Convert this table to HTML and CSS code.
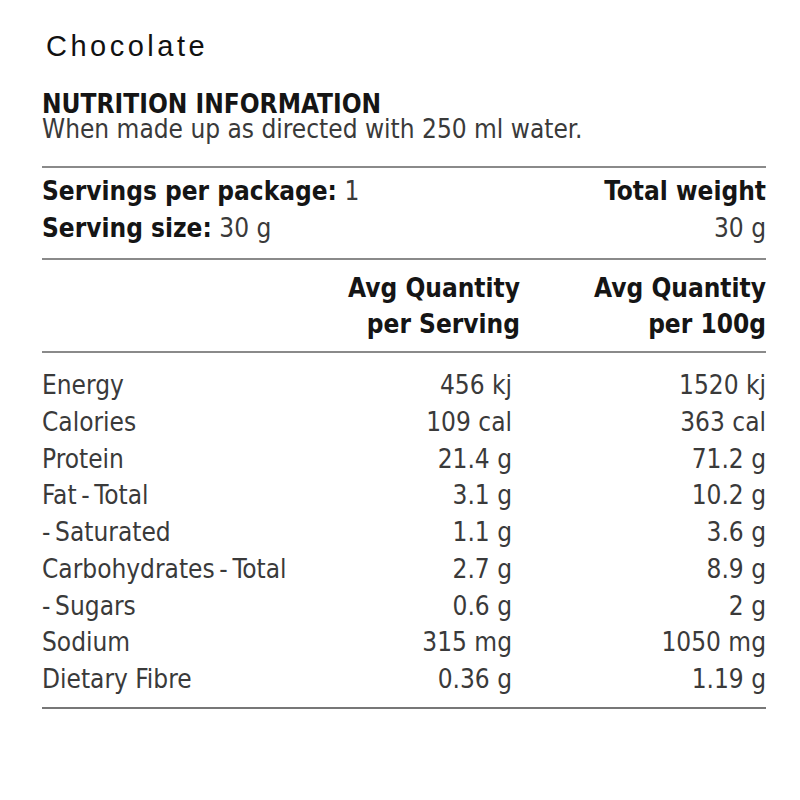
FILE: index.html
```html
<!DOCTYPE html>
<html>
<head>
<meta charset="utf-8">
<link rel="stylesheet" href="styles.css">
</head>
<body>
<div class="title">Chocolate</div>
<div class="label">
  <div class="heading">NUTRITION INFORMATION</div>
  <div class="sub">When made up as directed with 250 ml water.</div>
  <div class="servings">
    <div class="serv-left">
      <div><b>Servings per package:</b> 1</div>
      <div><b>Serving size:</b> 30 g</div>
    </div>
    <div class="serv-right">
      <div><b>Total weight</b></div>
      <div>30 g</div>
    </div>
  </div>
  <div class="colhead">
    <div></div>
    <div class="h2">Avg Quantity<br>per Serving</div>
    <div class="h3">Avg Quantity<br>per 100g</div>
  </div>
  <div class="rows">
    <div class="row"><span>Energy</span><span class="v2">456 kj</span><span class="v3">1520 kj</span></div>
    <div class="row"><span>Calories</span><span class="v2">109 cal</span><span class="v3">363 cal</span></div>
    <div class="row"><span>Protein</span><span class="v2">21.4 g</span><span class="v3">71.2 g</span></div>
    <div class="row"><span>Fat&thinsp;-&thinsp;Total</span><span class="v2">3.1 g</span><span class="v3">10.2 g</span></div>
    <div class="row"><span>-&thinsp;Saturated</span><span class="v2">1.1 g</span><span class="v3">3.6 g</span></div>
    <div class="row"><span>Carbohydrates&thinsp;-&thinsp;Total</span><span class="v2">2.7 g</span><span class="v3">8.9 g</span></div>
    <div class="row"><span>-&thinsp;Sugars</span><span class="v2">0.6 g</span><span class="v3">2 g</span></div>
    <div class="row"><span>Sodium</span><span class="v2">315 mg</span><span class="v3">1050 mg</span></div>
    <div class="row"><span>Dietary Fibre</span><span class="v2">0.36 g</span><span class="v3">1.19 g</span></div>
  </div>
</div>
</body>
</html>
```
FILE: styles.css
```css
html, body { margin: 0; padding: 0; background: #fff; }
body { width: 800px; height: 800px; overflow: hidden; }
.title {
  font-family: "Liberation Sans", Arial, sans-serif;
  font-size: 29px;
  letter-spacing: 3.5px;
  color: #111;
  padding: 29px 0 0 46px;
  line-height: 34px;
}
.label {
  margin: 28.5px 0 0 42px;
  width: 724px;
  font-family: "DejaVu Sans Condensed", "DejaVu Sans", sans-serif;
  color: #3a3a3a;
  font-size: 26px;
}
.label b { color: #151515; }
.heading { font-weight: bold; color: #151515; line-height: 25px; }
.sub { line-height: 25px; padding-bottom: 24.5px; border-bottom: 2px solid #8a8a8a; }
.servings { display: flex; justify-content: space-between; padding: 4.5px 0 11.5px; border-bottom: 2px solid #8a8a8a; line-height: 37px; }
.serv-right { text-align: right; }
.colhead { display: grid; grid-template-columns: 1fr 220px 246px; font-weight: bold; color: #151515; line-height: 36px; padding: 10px 0 9px; border-bottom: 2px solid #8a8a8a; }
.h2, .h3 { text-align: right; }
.rows { padding: 14px 0 9.5px; border-bottom: 2px solid #777; }
.row { display: grid; grid-template-columns: 1fr 220px 246px; line-height: 36.75px; white-space: nowrap; }
.v2 { text-align: right; padding-right: 8px; }
.v3 { text-align: right; }
```
